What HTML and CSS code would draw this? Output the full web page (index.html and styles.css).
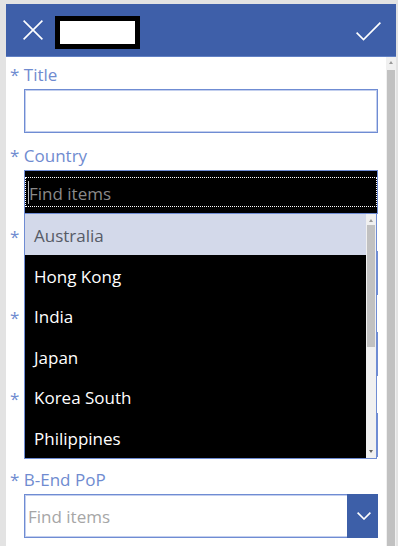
FILE: index.html
```html
<!DOCTYPE html>
<html lang="en">
<head>
<meta charset="utf-8">
<title>New item</title>
<link rel="stylesheet" href="styles.css">
</head>
<body>
<div class="frame">
  <header class="topbar">
    <svg class="icon-x" viewBox="0 0 20 20" aria-label="Close"><path d="M0.6 0.6 L19.4 19.4 M19.4 0.6 L0.6 19.4" stroke="#fff" stroke-width="1.6" fill="none"/></svg>
    <div class="redact"></div>
    <div class="spacer"></div>
    <svg class="icon-check" viewBox="0 0 25 19" aria-label="Submit"><polyline points="0.6,10.6 7.5,17.5 24.4,0.6" stroke="#fff" stroke-width="1.6" fill="none"/></svg>
  </header>
  <div class="main">
    <div class="content">
      <div class="field">
        <div class="label"><span class="req">*</span> Title</div>
        <div class="control"></div>
      </div>
      <div class="field">
        <div class="label"><span class="req">*</span> Country</div>
        <div class="control focused">
          <div class="ring"><span class="caret"></span>Find items</div>
        </div>
        <div class="listbox">
          <ul class="options">
            <li class="option active">Australia</li>
            <li class="option">Hong Kong</li>
            <li class="option">India</li>
            <li class="option">Japan</li>
            <li class="option">Korea South</li>
            <li class="option">Philippines</li>
          </ul>
          <div class="lscroll">
            <span class="arr up"></span>
            <span class="lthumb"></span>
            <span class="fill"></span>
            <span class="arr down"></span>
          </div>
        </div>
      </div>
      <div class="field">
        <div class="label"><span class="req">*</span></div>
        <div class="control"></div>
      </div>
      <div class="field">
        <div class="label"><span class="req">*</span></div>
        <div class="control"></div>
      </div>
      <div class="field">
        <div class="label"><span class="req">*</span></div>
        <div class="control"></div>
      </div>
      <div class="field">
        <div class="label"><span class="req">*</span> B-End PoP</div>
        <div class="control select">
          <span class="ph">Find items</span>
          <span class="btn"><svg class="chev" viewBox="0 0 14 8"><polyline points="0.6,0.6 7,7 13.4,0.6" stroke="#fff" stroke-width="1.6" fill="none"/></svg></span>
        </div>
      </div>
    </div>
    <div class="vscroll">
      <span class="arr up"></span>
      <span class="vthumb"></span>
    </div>
  </div>
</div>
</body>
</html>
```
FILE: styles.css
```css
* { box-sizing: border-box; }
html, body { margin: 0; height: 100%; }
body {
  font-family: "Open Sans", "Noto Sans", sans-serif;
  background: #e3e3e3;
  overflow: hidden;
}
.frame {
  height: 100vh;
  padding: 4px 2px 0 6px;
  display: flex;
  flex-direction: column;
}
.topbar {
  flex: none;
  height: 53px;
  background: #3e5fa9;
  border-bottom: 1px solid #6281c4;
  display: flex;
  align-items: center;
  padding: 0 15px 0 17px;
}
.icon-x { width: 20px; height: 20px; display: block; }
.redact {
  width: 85px;
  height: 33px;
  border: 5px solid #000;
  background: #fff;
  margin-left: 12px;
  margin-top: 4px;
}
.spacer { flex: 1; }
.icon-check { width: 25px; height: 19px; display: block; margin-top: 2px; }

.main { flex: 1; display: flex; min-height: 0; }
.content {
  flex: 1;
  background: #fff;
  padding-top: 6px;
  overflow: hidden;
}
.vscroll {
  width: 10px;
  background: #f0f0f0;
  display: flex;
  flex-direction: column;
  align-items: center;
}
.vscroll .arr.up { margin-top: 4px; margin-bottom: 6px; }
.vthumb { width: 8px; flex: 1; background: #c1c1c1; }

.arr { width: 0; height: 0; border-left: 2.5px solid transparent; border-right: 2.5px solid transparent; }
.arr.up { border-bottom: 3px solid #9a9a9a; }
.arr.down { border-top: 3px solid #606060; }

.field {
  position: relative;
  padding: 0 8px 11px 4px;
}
.label {
  height: 24px;
  line-height: 24px;
  font-size: 17px;
  color: #6f8bd0;
  margin-bottom: 2px;
  white-space: nowrap;
}
.control {
  margin-left: 14px;
  height: 44px;
  border: 1px solid #6f8cd3;
  box-shadow: inset 0 0 0 1px #c3cfee;
  background: #fff;
}
.control.focused {
  background: #000;
  box-shadow: none;
  padding: 6px 0;
}
.ring {
  position: relative;
  height: 30px;
  border: 1px dotted #fff;
  padding: 3px 0 0 3px;
  line-height: 25px;
  font-size: 17px;
  color: #8a8a8a;
}
.caret {
  position: absolute;
  left: 2px;
  top: 3px;
  width: 1px;
  height: 23px;
  background: #bdbdbd;
}

.listbox {
  position: absolute;
  left: 18px;
  top: 70px;
  width: 353px;
  height: 245px;
  background: #000;
  border: 1px solid #6f8cd3;
  border-top: 0;
  display: flex;
  z-index: 2;
}
.options { flex: 1; list-style: none; margin: 0; padding: 0; }
.option {
  height: 40.5px;
  padding: 3px 0 0 9px;
  line-height: 37.5px;
  font-size: 17px;
  color: #fff;
}
.option.active { background: #d3d9ea; color: #565b66; }
.lscroll {
  width: 10px;
  background: #f0f0f0;
  display: flex;
  flex-direction: column;
  align-items: center;
}
.lscroll .arr.up { margin-top: 5px; }
.lthumb { width: 8px; height: 122px; margin-top: 3px; background: #c1c1c1; }
.lscroll .fill { flex: 1; }
.lscroll .arr.down { margin-bottom: 5px; }

.select {
  display: flex;
  align-items: stretch;
}
.select .ph {
  flex: 1;
  padding: 2px 0 0 3px;
  line-height: 40px;
  font-size: 17px;
  color: #a6a6a6;
}
.select .btn {
  width: 31px;
  margin: -1px -1px -1px 0;
  padding-left: 3px;
  background: #3d5fa8;
  display: flex;
  align-items: center;
  justify-content: center;
}
.chev { width: 14px; height: 8px; display: block; }
```
